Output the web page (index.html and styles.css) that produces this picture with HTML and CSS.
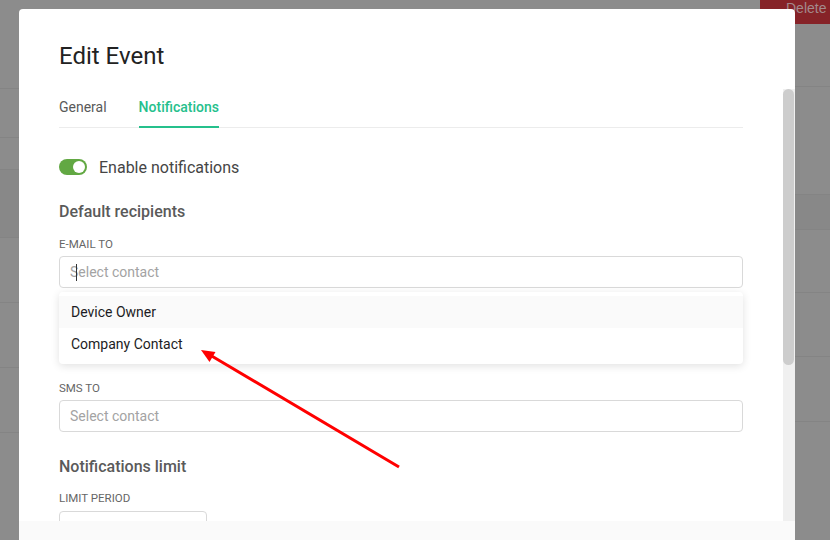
FILE: index.html
```html
<!DOCTYPE html>
<html>
<head>
<meta charset="utf-8">
<link rel="stylesheet" href="styles.css">
</head>
<body>
<div class="page">
  <div class="bg-col bg-left">
    <div class="r" style="height:89px"></div>
    <div class="r" style="height:49px"></div>
    <div class="r" style="height:32px"></div>
    <div class="r dark" style="height:68px"></div>
    <div class="r" style="height:65px"></div>
    <div class="r" style="height:65px"></div>
    <div class="r" style="height:65px"></div>
  </div>
  <div class="bg-col bg-right">
    <div class="del-wrap"><span class="del">Delete</span></div>
    <div class="r" style="height:63px"></div>
    <div class="r" style="height:108px"></div>
    <div class="r dark" style="height:35px"></div>
    <div class="r" style="height:63px"></div>
    <div class="r" style="height:64px"></div>
    <div class="r" style="height:65px"></div>
  </div>
</div>

<div class="modal">
  <div class="modal-body">
    <h1 class="title">Edit Event</h1>
    <div class="tabs">
      <div class="tab">General</div>
      <div class="tab active">Notifications</div>
    </div>

    <div class="switch-row">
      <span class="switch"><span class="knob"></span></span>
      <span class="switch-label">Enable notifications</span>
    </div>

    <h2 class="section">Default recipients</h2>

    <div class="field field-email">
      <div class="label">E-MAIL TO</div>
      <div class="input focused">
        <span class="placeholder">Select contact</span>
        <span class="caret"></span>
      </div>
      <div class="menu">
        <div class="item hover">Device Owner</div>
        <div class="item">Company Contact</div>
      </div>
    </div>

    <div class="field">
      <div class="label">SMS TO</div>
      <div class="input"><span class="placeholder">Select contact</span></div>
    </div>

    <h2 class="section section-limit">Notifications limit</h2>

    <div class="field">
      <div class="label">LIMIT PERIOD</div>
      <div class="input small"><span class="value">a day</span></div>
    </div>
  </div>
  <div class="scrollbar"><div class="thumb"></div></div>
  <div class="footer"></div>
</div>

<svg class="arrow" width="830" height="540" viewBox="0 0 830 540">
  <line x1="399" y1="467" x2="210" y2="355" stroke="#ff0000" stroke-width="3"/>
  <polygon points="201,350 215.5,352 209.5,362" fill="#ff0000"/>
</svg>
</body>
</html>
```

FILE: styles.css
```css
* { box-sizing: border-box; }
html, body {
  margin: 0;
  padding: 0;
  width: 830px;
  height: 540px;
  overflow: hidden;
  background: #8c8c8c;
  font-family: Roboto, "Liberation Sans", sans-serif;
}
.page {
  display: flex;
  justify-content: space-between;
  height: 540px;
}
.bg-col { display: flex; flex-direction: column; }
.bg-left { width: 19px; }
.bg-right { width: 70px; }
.r { border-bottom: 1px solid #848484; }
.r.dark { background: #888888; }
.del-wrap {
  height: 24px;
  background: #862328;
  padding-left: 26px;
  line-height: 16px;
}
.del {
  font-size: 14px;
  color: #a38a8c;
  font-family: "Liberation Sans", Roboto, sans-serif;
}

.modal {
  position: absolute;
  left: 19px;
  top: 9px;
  width: 776px;
  height: 531px;
  background: #ffffff;
  border-radius: 4px 4px 0 0;
  overflow: hidden;
}
.modal-body {
  padding: 31px 52px 0 40px;
}
.title {
  margin: 0;
  font-size: 24px;
  line-height: 32px;
  font-weight: 400;
  color: #222222;
}
.tabs {
  margin-top: 15px;
  display: flex;
  gap: 32px;
  border-bottom: 1px solid #ececec;
}
.tab {
  position: relative;
  height: 40px;
  padding-top: 10px;
  font-size: 14px;
  line-height: 20px;
  color: #595959;
}
.tab.active {
  color: #25c08c;
  font-weight: 500;
}
.tab.active::after {
  content: "";
  position: absolute;
  left: 0;
  right: 0;
  bottom: -1px;
  height: 2px;
  background: #25c08c;
}
.switch-row {
  margin-top: 29px;
  display: flex;
  align-items: center;
  gap: 12px;
  height: 20px;
}
.switch {
  position: relative;
  width: 28px;
  height: 16px;
  border-radius: 8px;
  background: #62a843;
}
.knob {
  position: absolute;
  right: 2px;
  top: 2px;
  width: 12px;
  height: 12px;
  border-radius: 50%;
  background: #ffffff;
}
.switch-label {
  font-size: 16px;
  color: #454545;
}
.section {
  margin: 23px 0 0;
  font-size: 16px;
  line-height: 24px;
  font-weight: 500;
  color: #5a5a5a;
}
.field {
  position: relative;
  margin-top: 11px;
}
.field-email { margin-bottom: 91px; }
.field-email + .field { margin-top: 0; }
.label {
  font-size: 11.5px;
  line-height: 16px;
  height: 16px;
  padding-top: 1px;
  color: #666666;
}
.input {
  position: relative;
  margin-top: 5px;
  height: 32px;
  border: 1px solid #d9d9d9;
  border-radius: 4px;
  padding-left: 10px;
  display: flex;
  align-items: center;
  font-size: 14px;
}
.input.small { width: 148px; margin-top: 6px; }
.placeholder { color: #a3a3a3; }
.value { color: #333333; }
.caret {
  position: absolute;
  left: 16px;
  top: 7px;
  width: 1px;
  height: 17px;
  background: #333333;
}
.menu {
  position: absolute;
  left: 0;
  right: 0;
  top: 57px;
  padding: 4px 0;
  background: #ffffff;
  border-radius: 4px;
  box-shadow: 0 2px 8px rgba(0, 0, 0, 0.12);
}
.item {
  height: 32px;
  padding-left: 12px;
  padding-bottom: 1px;
  display: flex;
  align-items: center;
  font-size: 14px;
  color: #1c1c24;
}
.item.hover { background: #fafafa; }
.section-limit { margin-top: 23px; }
.section-limit + .field { margin-top: 10px; }

.scrollbar {
  position: absolute;
  left: 764px;
  top: 80px;
  width: 12px;
  height: 432px;
  background: #f0f0f0;
}
.thumb {
  width: 11px;
  height: 276px;
  border-radius: 6px;
  background: #cdcdcd;
}
.footer {
  position: absolute;
  left: 0;
  right: 0;
  bottom: 0;
  height: 19px;
  background: #fafafa;
}
.arrow {
  position: absolute;
  left: 0;
  top: 0;
}
```
